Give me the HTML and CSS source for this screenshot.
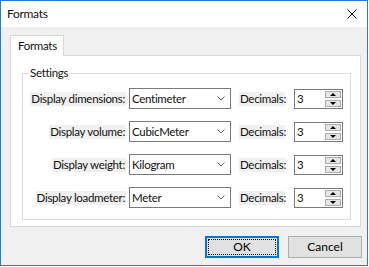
FILE: index.html
```html
<!DOCTYPE html>
<html lang="en">
<head>
    <meta charset="UTF-8">
    <title>Formats</title>
    <link rel="stylesheet" href="styles.css">
</head>
<body>
    <div class="window">
        <div class="titlebar">
            <span class="title">Formats</span>
            <button class="close" aria-label="Close">
                <svg width="10" height="10" viewBox="0 0 10 10">
                    <path d="M0.5 0.5 L9.5 9.5 M9.5 0.5 L0.5 9.5" stroke="#000" stroke-width="1" fill="none"/>
                </svg>
            </button>
        </div>

        <div class="client">
            <div class="tabs">
                <div class="tab active">Formats</div>
            </div>

            <div class="tab-page">
                <fieldset class="group">
                    <legend>Settings</legend>

                    <div class="row">
                        <div class="label-cell"><span class="label">Display dimensions:</span></div>
                        <div class="combo"><span>Centimeter</span><svg class="chevron" width="8" height="5" viewBox="0 0 8 5"><polyline points="0.5,0.5 4,4 7.5,0.5" fill="none" stroke="#606060"/></svg></div>
                        <span class="label decimals">Decimals:</span>
                        <div class="spinner"><span>3</span><div class="spin-buttons"><div class="spin-btn up"></div><div class="spin-btn down"></div></div></div>
                    </div>

                    <div class="row">
                        <div class="label-cell"><span class="label">Display volume:</span></div>
                        <div class="combo"><span>CubicMeter</span><svg class="chevron" width="8" height="5" viewBox="0 0 8 5"><polyline points="0.5,0.5 4,4 7.5,0.5" fill="none" stroke="#606060"/></svg></div>
                        <span class="label decimals">Decimals:</span>
                        <div class="spinner"><span>3</span><div class="spin-buttons"><div class="spin-btn up"></div><div class="spin-btn down"></div></div></div>
                    </div>

                    <div class="row">
                        <div class="label-cell"><span class="label">Display weight:</span></div>
                        <div class="combo"><span>Kilogram</span><svg class="chevron" width="8" height="5" viewBox="0 0 8 5"><polyline points="0.5,0.5 4,4 7.5,0.5" fill="none" stroke="#606060"/></svg></div>
                        <span class="label decimals">Decimals:</span>
                        <div class="spinner"><span>3</span><div class="spin-buttons"><div class="spin-btn up"></div><div class="spin-btn down"></div></div></div>
                    </div>

                    <div class="row">
                        <div class="label-cell"><span class="label">Display loadmeter:</span></div>
                        <div class="combo"><span>Meter</span><svg class="chevron" width="8" height="5" viewBox="0 0 8 5"><polyline points="0.5,0.5 4,4 7.5,0.5" fill="none" stroke="#606060"/></svg></div>
                        <span class="label decimals">Decimals:</span>
                        <div class="spinner"><span>3</span><div class="spin-buttons"><div class="spin-btn up"></div><div class="spin-btn down"></div></div></div>
                    </div>
                </fieldset>
            </div>

            <div class="buttons">
                <button class="btn default"><span class="focus">OK</span></button>
                <button class="btn">Cancel</button>
            </div>
        </div>
    </div>
</body>
</html>
```

FILE: styles.css
```css
html, body {
    margin: 0;
    padding: 0;
    background-color: #ffffff;
}

body {
    font-family: Lato, "Noto Sans", sans-serif;
    font-size: 11.5px;
    letter-spacing: -0.3px;
    color: #111;
    white-space: nowrap;
}

.window {
    width: 368px;
    height: 266px;
    box-sizing: border-box;
    border: 1px solid #2a7bcf;
    background-color: #f0f0f0;
    display: flex;
    flex-direction: column;
}

.titlebar {
    height: 26px;
    background-color: #fff;
    display: flex;
    align-items: center;
    padding-left: 6px;
    font-size: 12px;
}

.title {
    flex: 1;
    line-height: 16px;
}

.close {
    border: none;
    background: none;
    padding: 0;
    width: 10px;
    height: 10px;
    margin-right: 10px;
    display: flex;
}

.client {
    padding: 8px 5px 0 9px;
}

.tabs {
    display: flex;
    margin-bottom: -1px;
}

.tab {
    width: 54px;
    height: 21px;
    box-sizing: border-box;
    border: 1px solid #d9d9d9;
    border-bottom: none;
    background-color: #fff;
    position: relative;
    z-index: 1;
    padding-left: 7px;
    line-height: 19px;
}

.tab-page {
    width: 351px;
    height: 172px;
    box-sizing: border-box;
    border: 1px solid #d9d9d9;
    background-color: #fff;
    padding: 9px 0 0 11px;
}

.group {
    width: 329px;
    box-sizing: border-box;
    margin: 0;
    padding: 7px 0 11px 0;
    border: 1px solid #dcdcdc;
    display: flex;
    flex-direction: column;
    gap: 12px;
}

.group legend {
    margin-left: 6px;
    padding: 0 1px;
    line-height: 16px;
}

.row {
    display: flex;
    align-items: center;
    height: 21px;
}

.label-cell {
    width: 103px;
    text-align: right;
}

.label {
    display: inline-block;
    background-color: #f0f0f0;
    line-height: 14px;
    padding: 0 1px;
}

.combo {
    width: 102px;
    height: 21px;
    box-sizing: border-box;
    margin-left: 3px;
    border: 1px solid #7a7a7a;
    background-color: #fff;
    display: flex;
    align-items: center;
    padding-left: 2px;
    padding-right: 5px;
    line-height: 16px;
}

.combo span {
    flex: 1;
}

.decimals {
    margin-left: 8px;
    width: 46px;
    box-sizing: border-box;
}

.spinner {
    width: 49px;
    height: 20px;
    box-sizing: border-box;
    margin-left: 9px;
    border: 1px solid #7a7a7a;
    background-color: #fff;
    display: flex;
    align-items: center;
    padding-left: 2px;
    padding-right: 1px;
}

.spinner span {
    flex: 1;
    line-height: 16px;
}

.spin-buttons {
    display: flex;
    flex-direction: column;
    gap: 2px;
}

.spin-btn {
    width: 16px;
    height: 7px;
    box-sizing: border-box;
    border: 1px solid #adadad;
    background-color: #e5e5e5;
    display: flex;
    align-items: center;
    justify-content: center;
}

.spin-btn::after {
    content: "";
    width: 0;
    height: 0;
    border-left: 3px solid transparent;
    border-right: 3px solid transparent;
}

.spin-btn.up::after {
    border-bottom: 3px solid #000;
}

.spin-btn.down::after {
    border-top: 3px solid #000;
}

.buttons {
    display: flex;
    justify-content: flex-end;
    gap: 9px;
    margin-top: 9px;
    padding-right: 0;
}

.btn {
    width: 74px;
    height: 22px;
    box-sizing: border-box;
    border: 1px solid #adadad;
    background-color: #e1e1e1;
    font-family: Lato, "Noto Sans", sans-serif;
    font-size: 12px;
    color: #000;
    padding: 0;
    line-height: 16px;
}

.btn.default {
    border: 2px solid #0078d7;
    padding: 1px;
}

.btn.default .focus {
    display: flex;
    align-items: center;
    justify-content: center;
    height: 100%;
    box-sizing: border-box;
    outline: 1px dotted #000;
    outline-offset: -1px;
}
```
